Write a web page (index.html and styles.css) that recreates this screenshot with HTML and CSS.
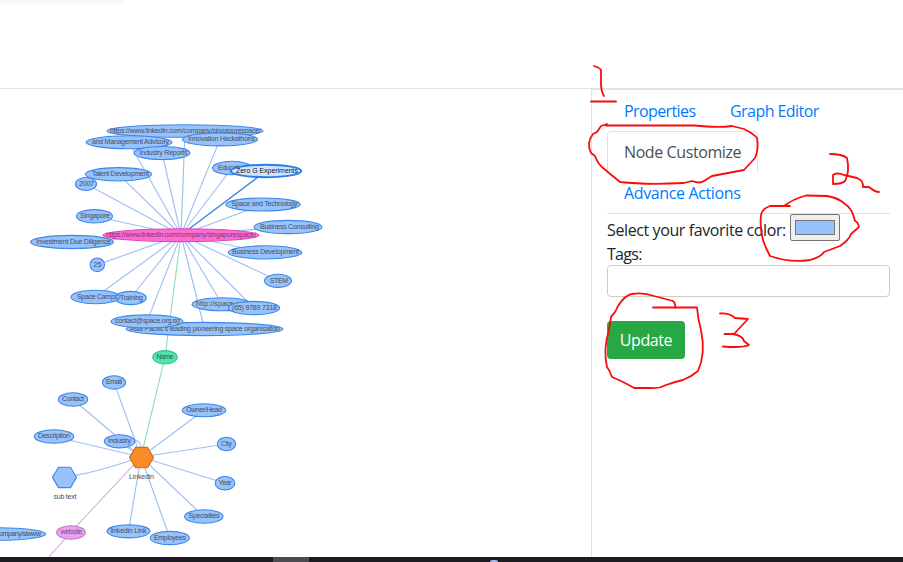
FILE: index.html
```html
<!DOCTYPE html>
<html lang="en">
<head>
<meta charset="utf-8">
<title>Graph Editor</title>
<link rel="stylesheet" href="styles.css">
</head>
<body>
<div class="app">
  <header class="header"><div class="search"></div></header>
  <main class="main">
    <section class="canvas">
      <svg class="graph" viewBox="0 89 591 468" width="591" height="468">
        <g class="edges" id="edges"></g>
        <g id="nodes"></g>
      </svg>
    </section>
    <aside class="panel">
      <nav class="tabs">
        <a class="tab properties">Properties</a>
        <a class="tab editor">Graph Editor</a>
        <a class="tab active">Node Customize</a>
        <a class="tab advance">Advance Actions</a>
      </nav>
      <div class="color-row"><span class="color-label">Select your favorite color:</span><span class="color"><span class="swatch"></span></span></div>
      <div class="tags-label">Tags:</div>
      <input class="tags" type="text">
      <button class="update">Update</button>
    </aside>
  </main>
  <footer class="taskbar"><span class="task"></span><span class="task-icon"></span></footer>
</div>
<svg class="ink" viewBox="0 0 903 562" width="903" height="562">
  <path d="M594 66Q600 68 601 70V84Q601 91 604 96M591 101.500H616"/>
  <path d="M607 124L601 126L597 132L593 134Q586 143 591 153L595 156Q598 164 603 168L620 182Q646 185 684 183L692 181Q700 184 704 181L712 176L744 170L755 158Q759 149 757 138Q754 134 744 129L732 126Q718 128 694 125.500H606"/>
  <path d="M830 154Q842 154 847 158Q850 172 845 181Q842 184 833 184V175Q837 172 844 175L857 178Q864 181 863 187H869Q875 192 879 192"/>
  <path d="M790 206H770Q762 209 761 215Q759 234 767 250L770 256Q790 263 810 260Q821 257 824 252L840 246Q849 240 851 234L859 227Q858 222 855 221Q852 208 845 204Q839 198 827 196L806 195.500Q793 199 784 206"/>
  <path d="M653 307.500H697Q698 320 701 330Q706 353 698 371Q691 377 683 380Q674 382 666 385Q659 389 651 388H634Q626 383 612 377Q610 371 607 367Q603 349 609 330L611 317Q616 312 618 306Q625 295 632 294Q643 292 654 296L673 301Q676 304 675 308"/>
  <path d="M720 313.500Q730 313 735 318L748 319L734 334H724.500M733 334Q743 336 744 341L749 345Q743 348 723 346.500"/>
</svg>
<script src="graph.js"></script>
</body>
</html>
```
FILE: graph.js
```js
const NS = 'http://www.w3.org/2000/svg';
const add = (parent, name, attrs, text) => {
  const e = document.createElementNS(NS, name);
  for (const k in attrs) e.setAttribute(k, attrs[k]);
  if (text) e.textContent = text;
  document.getElementById(parent).appendChild(e);
};

// [label, cx, cy, rx, ry, text start, text width, kind]
const company = [
  ['https://www.linkedin.com/company/singaporespace/', 185, 131, 78, 6.3, 110, 151],
  ['and Management Advisory', 129, 142.300, 43, 6.500, 92, 77],
  ['Industry Reports', 162, 153, 28, 6.500, 139.500, 48],
  ['Innovation Hackathons', 220, 139.400, 37.500, 6.500, 188, 67],
  ['2007', 86, 184, 10.500, 6.500, 79, 15],
  ['Talent Development', 118.500, 174.300, 33, 6.700, 92, 57],
  ['Education', 232, 168, 19.500, 6.700, 218, 28],
  ['Singapore', 94.500, 216.300, 18, 6.700, 80, 30],
  ['Space and Technology', 263, 204.500, 37.200, 6.500, 231.500, 66],
  ['Business Consulting', 288, 227, 34, 6.600, 260, 59],
  ['Investment Due Diligence', 72, 242, 41.500, 6.600, 36, 75],
  ['Business Development', 265, 252.400, 36.700, 6.600, 232, 67],
  ['25', 97.300, 264.800, 7.200, 6.800, 93.500, 8],
  ['STEM', 278, 280.800, 13.500, 6.600, 270, 18],
  ['Training', 130.500, 298, 15.700, 6.600, 120, 23],
  ['Space Camps', 95.500, 297, 24.500, 6.700, 77, 41],
  ['http://space.org', 222, 304.300, 30, 6.500, 196, 50],
  ['(65) 9789 7318', 254, 308, 25.700, 6.600, 232, 45],
  ['Asia Pacific\'s leading pioneering space organisation', 204.500, 329, 78.500, 6.600, 130, 150],
  ['contact@space.org.sg', 147, 321.400, 36, 6.500, 115, 65]
];
const profile = [
  ['Email', 114, 382.400, 11.600, 6.700, 106, 16],
  ['Contact', 73, 399.500, 14.700, 6.700, 62, 22],
  ['Description', 54, 436.500, 19.700, 6.700, 38, 32],
  ['Industry', 119.500, 441.300, 15.200, 6.600, 108, 23],
  ['Owner/Head', 204, 410.300, 21.700, 6.500, 186, 36],
  ['City', 226.500, 444, 9.200, 6.700, 221, 11],
  ['Year', 225, 483.200, 9.900, 6.700, 218.500, 13],
  ['Specialties', 203.800, 516.500, 19.200, 6.700, 188.500, 31],
  ['Employees', 169.800, 538, 19.600, 6.600, 154, 32],
  ['linkedin Link', 128.500, 531.300, 21.500, 6.600, 110.500, 36]
];
const others = [
  ['company/siwww', -5, 534, 50.500, 6.300, -4, 45],
  ['Name', 165, 357.300, 12.200, 6.700, 156.500, 17, 'green'],
  ['website', 71, 532.500, 14.400, 6.700, 60.500, 22, 'violet'],
  ['https://www.linkedin.com/company/singaporespace/', 181, 235.200, 78, 6.400, 106, 150, 'pink'],
  ['Zero G Experiments', 266, 171, 35.300, 6.200, 236, 62, 'selected']
];

company.forEach(n => add('edges', 'path', { d: `M181 235L${n[1]} ${n[2]}` }));
profile.forEach(n => add('edges', 'path', { d: `M141 457L${n[1]} ${n[2]}` }));
add('edges', 'path', { d: 'M64 477Q92 474 141 457M119 441Q140 434 142 450' });
add('edges', 'path', { d: 'M181 235L266 171', class: 'strong' });
add('edges', 'path', { d: 'M181 235L165 357L141 457', class: 'name-edge' });
add('edges', 'path', { d: 'M141 457L71 532L48 558', class: 'site-edge' });

[...company, ...profile, ...others].forEach(([label, cx, cy, rx, ry, x, w, kind]) => {
  add('nodes', 'ellipse', { cx, cy, rx, ry, class: 'node ' + (kind || '') });
  add('nodes', 'text', { x, y: cy + 1.8, textLength: w, class: 'label ' + (kind || '') }, label);
});
add('nodes', 'path', { d: 'M52.500 477.400L58.500 467.200H70.500L76.500 477.400L70.500 487.600H58.500Z', class: 'node' });
add('nodes', 'path', { d: 'M129.500 457.600L135.500 447.400H147.500L153.500 457.600L147.500 467.800H135.500Z', class: 'node orange' });
add('nodes', 'text', { x: 53.5, y: 499, textLength: 23, class: 'label' }, 'sub text');
add('nodes', 'text', { x: 129, y: 479, textLength: 25, class: 'label' }, 'Linkedin');
```
FILE: styles.css
```css
* { box-sizing: border-box; }
body {
  margin: 0;
  background: #fff;
  color: #212529;
  font: 16px/24px "Open Sans", "Noto Sans", sans-serif;
}
.app { display: flex; flex-direction: column; height: 562px; overflow: hidden; }
.header { flex: 0 0 89px; border-bottom: 1px solid #dee2e6; }
.search { width: 126px; height: 4px; background: #f8f9fa; border-radius: 0 0 4px 0; }
.main { flex: 1; display: flex; min-height: 0; }
.canvas { width: 591px; }
.graph { display: block; }
.panel {
  flex: 1;
  padding: 0 13px 0 15px;
  border-top: 1px solid #dee2e6;
  border-left: 1px solid #dee2e6;
}
.tabs { display: flex; flex-wrap: wrap; border-bottom: 1px solid #dee2e6; }
.tab {
  height: 42px;
  margin-bottom: -1px;
  padding: 8px 16px;
  border: 1px solid transparent;
  border-radius: 4px 4px 0 0;
  color: #007bff;
  white-space: nowrap;
}
.properties { width: 106px; letter-spacing: -.6px; }
.editor { width: 124px; letter-spacing: -.55px; }
.active { width: 151px; color: #495057; background: #fff; border-color: #dee2e6 #dee2e6 #fff; letter-spacing: -.4px; }
.advance { width: 151px; letter-spacing: -.37px; }
.color-row { display: flex; height: 27px; align-items: center; margin-bottom: 1px; }
.color-label { width: 183px; padding-top: 4px; letter-spacing: -.39px; white-space: nowrap; }
.color {
  display: flex;
  width: 50px;
  height: 27px;
  padding: 5px 4px;
  background: #efefef;
  border: 1px solid #767676;
  border-radius: 2px;
}
.swatch { flex: 1; background: #97c2fc; border: 1px solid #777; }
.tags-label { height: 23px; line-height: 24px; letter-spacing: -.7px; }
.tags {
  display: block;
  width: 283px;
  height: 32px;
  border: 1px solid #ccc;
  border-radius: 4px;
  background: #fff;
}
.update {
  display: block;
  width: 78px;
  height: 38px;
  margin-top: 24px;
  padding: 0;
  border: 0;
  border-radius: 4px;
  background: #28a745;
  color: #fff;
  font: inherit;
  letter-spacing: -.4px;
}
.taskbar { flex: 0 0 5px; display: flex; background: #1c1b20; }
.task { width: 36px; height: 5px; margin-left: 273px; background: #4c4c50; }
.task-icon { width: 8px; height: 2px; margin: 3px 0 0 181px; border-radius: 4px 4px 0 0; background: #9eb6eb; }
.edges path { fill: none; stroke: #9fc0f3; stroke-width: 1.15; }
.edges .strong { stroke: #3b83e8; stroke-width: 1.4; }
.edges .name-edge { stroke: #94dcc0; }
.edges .site-edge { stroke: #dcb8e2; }
.node { fill: #97c2fc; stroke: #3d87ea; stroke-width: 1.1; }
.node.green { fill: #52e3ae; stroke: #35c48f; }
.node.violet { fill: #e6a2ee; stroke: #c47bcf; }
.node.pink { fill: #ff6bd6; stroke: #e047b0; }
.node.orange { fill: #fa8c28; stroke: #c96d18; }
.node.selected { fill: #d2e5ff; stroke: #2b7ce9; stroke-width: 2; }
.label { font: 7px "Liberation Sans", Arial, sans-serif; fill: #464f5c; }
.label.pink { fill: #84366f; }
.label.green { fill: #28634d; }
.label.violet { fill: #70507a; }
.label.selected { fill: #111; }
.ink { position: absolute; top: 0; left: 0; pointer-events: none; }
.ink path { fill: none; stroke: #f90c0c; stroke-width: 1.8; stroke-linecap: round; stroke-linejoin: round; }
```
